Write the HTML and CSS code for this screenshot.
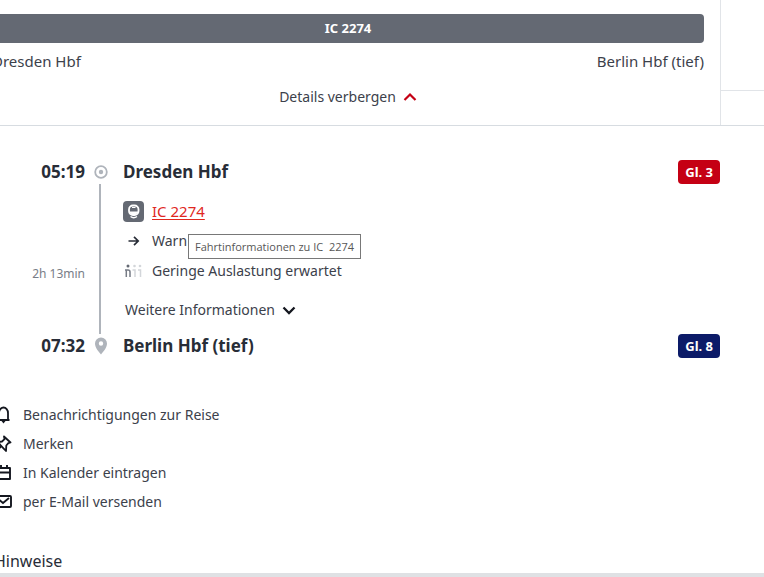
FILE: index.html
```html
<!DOCTYPE html>
<html lang="de">
<head>
<meta charset="utf-8">
<title>Reisedetails</title>
<link rel="stylesheet" href="styles.css">
</head>
<body>
<header class="overview">
  <section class="summary">
    <div class="train-bar">IC 2274</div>
    <div class="route"><span>Dresden Hbf</span><span>Berlin Hbf (tief)</span></div>
    <button class="toggle" type="button">Details verbergen
      <svg width="14" height="10" viewBox="0 0 14 10"><path d="M1.500 8 7 2.500 12.500 8" fill="none" stroke="#c50014" stroke-width="2.200"/></svg>
    </button>
  </section>
  <aside class="side"></aside>
</header>

<main>
  <section class="timeline">
    <time class="time">05:19</time>
    <svg class="marker" width="14" height="14" viewBox="0 0 14 14"><circle cx="7" cy="7" r="5.800" fill="none" stroke="#afb4bb" stroke-width="1.800"/><circle cx="7" cy="7" r="2.200" fill="#afb4bb"/></svg>
    <h2 class="station">Dresden Hbf</h2>
    <span class="platform changed">Gl. 3</span>

    <span class="duration">2h 13min</span>
    <span class="line"></span>
    <div class="leg">
      <div class="leg-row">
        <svg width="21" height="21" viewBox="0 0 21 21"><rect width="21" height="21" rx="4" fill="#646973"/><rect x="6" y="4.500" width="9.500" height="9.500" rx="4" fill="none" stroke="#fff" stroke-width="1.800"/><path d="M6.500 10.500h8.500v1.500q-4.200 3-8.500 0z" fill="#fff"/><path d="M7.500 15.500q3.200 2.500 6.500 0" fill="none" stroke="#fff" stroke-width="1.500"/><path d="M9 6.500h3.500" stroke="#fff"/></svg>
        <span class="with-tip"><a href="#fahrt">IC 2274</a><span class="tooltip" role="tooltip">Fahrtinformationen zu IC&nbsp; 2274</span></span>
      </div>
      <div class="leg-row">
        <svg width="21" height="20" viewBox="0 0 21 20"><path d="M5.500 10h9M11 5.800 15.200 10 11 14.200" fill="none" stroke="#282d37" stroke-width="1.700"/></svg>
        <span>Warn</span>
      </div>
      <div class="leg-row">
        <svg width="21" height="20" viewBox="0 0 21 20"><g fill="none" stroke="#777c86" stroke-width="1.500"><path d="M2 9h3q2 0 2 2v5M3.300 9v7"/></g><circle cx="5" cy="5" r="1.500" fill="#646973"/><g fill="none" stroke="#d3d6da" stroke-width="1.500"><path d="M9.500 9H12v7M15 9h2.500v7"/></g><circle cx="11.500" cy="5" r="1.300" fill="#d3d6da"/><circle cx="17" cy="5" r="1.300" fill="#d3d6da"/></svg>
        <span>Geringe Auslastung erwartet</span>
      </div>
      <button class="more" type="button">Weitere Informationen
        <svg width="14" height="10" viewBox="0 0 14 10"><path d="M1.500 2.500 7 8 12.500 2.500" fill="none" stroke="#14171f" stroke-width="2.300"/></svg>
      </button>
    </div>

    <time class="time">07:32</time>
    <svg class="marker" width="14" height="18" viewBox="0 0 14 18"><path fill-rule="evenodd" d="M7 .5a6 6 0 0 1 6 6c0 4-3.500 8-6 11-2.500-3-6-7-6-11a6 6 0 0 1 6-6zM7 4.300a2.200 2.200 0 1 0 0 4.400 2.200 2.200 0 0 0 0-4.400z" fill="#afb4bb"/></svg>
    <h2 class="station">Berlin Hbf (tief)</h2>
    <span class="platform">Gl. 8</span>
  </section>

  <ul class="actions">
    <li><button type="button"><svg width="20" height="20" viewBox="0 0 20 20"><path d="M4.500 15h12M6 15V8a4.500 5.500 0 0 1 9 0v7" fill="none" stroke="#14171f" stroke-width="1.800"/><path d="M8.500 16h4l-2 2.500z" fill="#14171f"/></svg>Benachrichtigungen zur Reise</button></li>
    <li><button type="button"><svg width="20" height="20" viewBox="0 0 20 20"><path d="m11 2.500 6.500 6-2.200.7-2 2.300-.3 5.500-3-3.200L7 10.500 4.500 8 9 7.500l2.500-2.300zM8 12.500 3.500 17" fill="none" stroke="#14171f" stroke-width="1.800" stroke-linejoin="round"/></svg>Merken</button></li>
    <li><button type="button"><svg width="20" height="20" viewBox="0 0 20 20"><path d="M3 5h14v11H3zM3 9.500h14M8 5V2M14 5V2" fill="none" stroke="#14171f" stroke-width="1.900" stroke-linejoin="round"/></svg>In Kalender eintragen</button></li>
    <li><button type="button"><svg width="20" height="20" viewBox="0 0 20 20"><rect x="1" y="4" width="17" height="11" rx="1" fill="none" stroke="#14171f" stroke-width="1.900"/><path d="m4 6 6 5 6-5" fill="none" stroke="#14171f" stroke-width="1.800"/></svg>per E-Mail versenden</button></li>
  </ul>

  <h3 class="notes">Hinweise</h3>
</main>
</body>
</html>
```
FILE: styles.css
```css
* {
  box-sizing: border-box;
}

body {
  margin: 0;
  overflow: hidden;
  background: #fff;
  color: #3c414b;
  font: 14px/20px "Noto Sans", sans-serif;
}

button {
  padding: 0;
  border: 0;
  background: none;
  color: inherit;
  font: inherit;
  cursor: pointer;
}

svg {
  flex: none;
}

.overview {
  display: grid;
  grid-template-columns: 1fr 44px;
  border-bottom: 1px solid #d7dce1;
}

.summary {
  display: flex;
  flex-direction: column;
  margin-left: -8px;
  padding: 14px 16px 18px 0;
}

.train-bar {
  height: 29px;
  border-radius: 4px;
  background: #646973;
  color: #fff;
  font-size: 13px;
  font-weight: 700;
  line-height: 28px;
  text-align: center;
}

.route {
  display: flex;
  justify-content: space-between;
  margin-top: 8px;
  font-size: 15px;
}

.toggle,
.more {
  display: flex;
  align-items: center;
  gap: 7px;
}

.toggle {
  align-self: center;
  margin-top: 16px;
}

.side {
  border-left: 1px solid #e1e4e8;
}

.side::before {
  display: block;
  height: 90px;
  border-bottom: 1px solid #e1e4e8;
  content: "";
}

.timeline {
  display: grid;
  grid-template-columns: 85px 32px 1fr auto;
  grid-template-rows: 24px 150px 24px;
  align-items: center;
  padding: 34px 44px 0 0;
}

.time,
.station {
  margin: 0;
  color: #282d37;
  font-size: 17px;
  font-weight: 700;
  line-height: 24px;
}

.time,
.duration {
  text-align: right;
}

.station {
  padding-left: 6px;
}

.marker {
  justify-self: center;
}

.line {
  align-self: stretch;
  width: 2px;
  margin-left: 14px;
  background: #afb4bb;
}

.duration {
  padding-top: 30px;
  color: #787d87;
  font-size: 12px;
}

.platform {
  padding: 0 7px;
  border-radius: 4px;
  background: #0c1b68;
  color: #fff;
  font-size: 13px;
  font-weight: 700;
  line-height: 24px;
}

.platform.changed {
  background: #c50014;
}

.leg {
  grid-column: 3 / -1;
  align-self: start;
  padding: 12px 0 0 6px;
}

.leg-row {
  display: flex;
  align-items: center;
  gap: 8px;
  height: 30px;
}

.leg a {
  color: #e0281f;
  font-size: 15px;
  text-underline-offset: 2px;
}

.with-tip {
  position: relative;
}

.tooltip {
  position: absolute;
  top: 33px;
  left: 36px;
  padding: 0 6px;
  border: 1px solid #787878;
  background: #fff;
  color: #575757;
  font: 11px/23px "Open Sans", sans-serif;
  white-space: nowrap;
}

.more {
  margin: 14px 0 0 2px;
}

.actions {
  margin: 0;
  padding: 42px 0 0;
  list-style: none;
}

.actions button {
  display: flex;
  align-items: center;
  gap: 10px;
  height: 29px;
  margin-left: -7px;
}

.notes {
  margin: 35px 0 0 -6px;
  padding-bottom: 2px;
  border-bottom: 8px solid #dfe1e4;
  color: #282d37;
  font-size: 16px;
  font-weight: 400;
}
```
